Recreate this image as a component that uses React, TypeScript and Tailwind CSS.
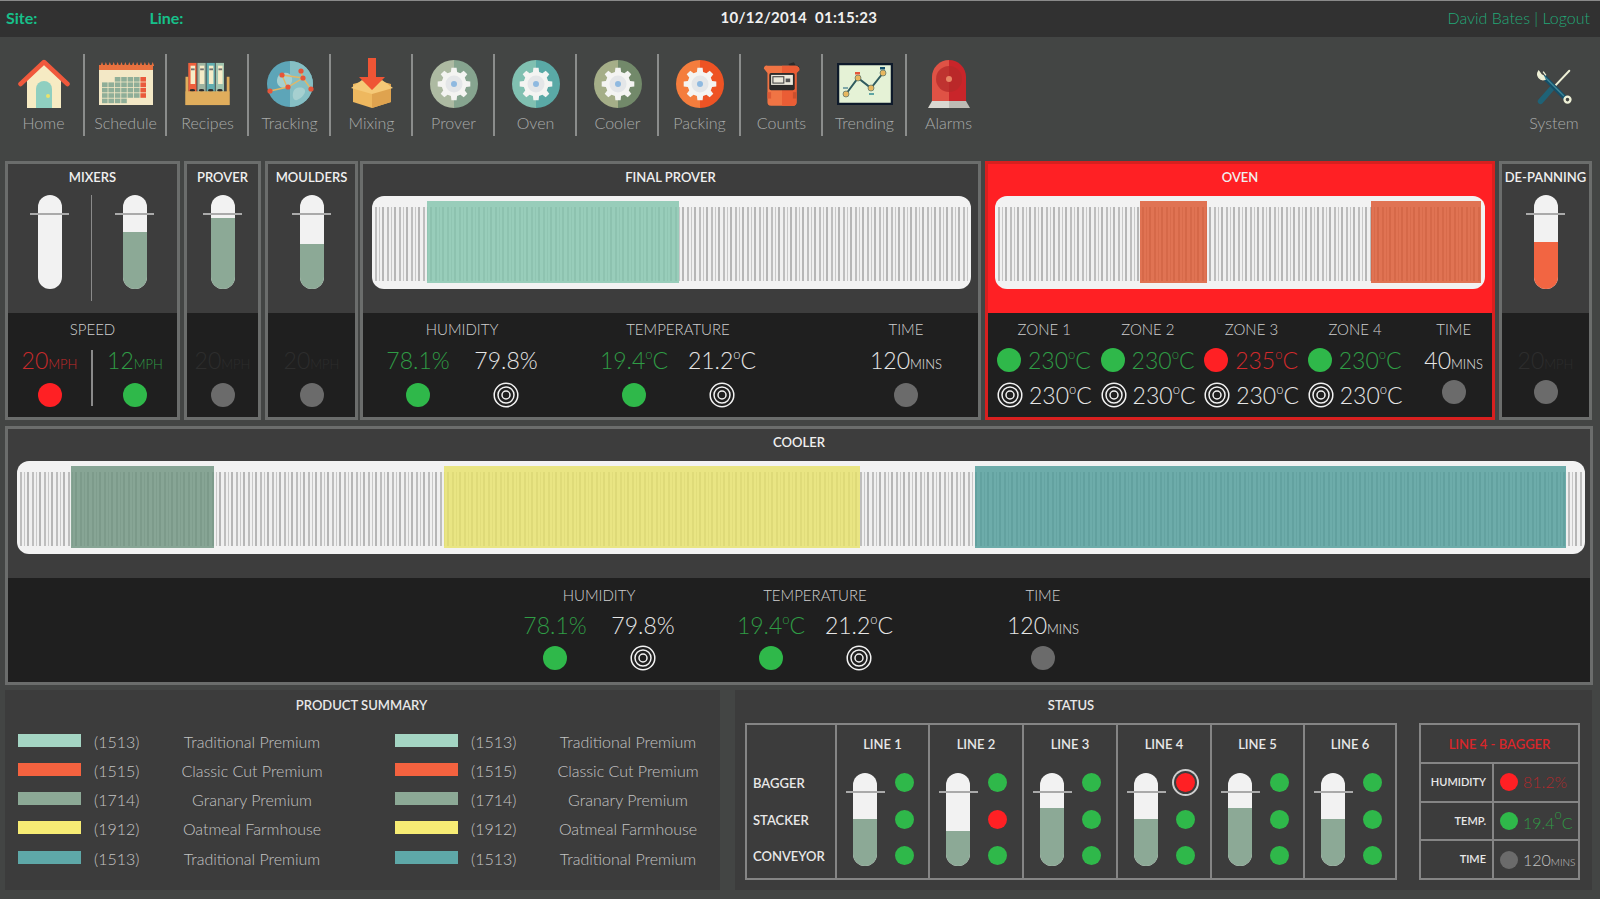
import React from 'react';

const GREEN = 'bg-[#2fb84a]';
const RED = 'bg-[#ff2024]';
const GREY = 'bg-[#6b6b6b]';

function Dot({ color, size = 'w-6 h-6', extra = '' }: { color: string; size?: string; extra?: string }) {
  return <div className={`${size} rounded-full shrink-0 ${color} ${extra}`} />;
}

function Target({ size = 26 }: { size?: number }) {
  return (
    <svg width={size} height={size} viewBox="0 0 26 26" fill="none" stroke="#f2f2f2" strokeWidth="1.5" className="shrink-0">
      <circle cx="13" cy="13" r="11.8" />
      <circle cx="13" cy="13" r="8" />
      <circle cx="13" cy="13" r="4" />
    </svg>
  );
}

function Deg({ v }: { v: string }) {
  return (
    <span>
      {v}
      <span className="text-[13px] align-[10px] leading-none">o</span>C
    </span>
  );
}

function Tube({ fill, h = 94, w = 'w-6', color = 'bg-[#8ca996]', marker = 39 }: { fill: number; h?: number; w?: string; color?: string; marker?: number }) {
  return (
    <div className="relative flex justify-center">
      <div className={`${w} rounded-full bg-[#f2f2f2] overflow-hidden flex flex-col justify-end`} style={{ height: h }}>
        <div className={color} style={{ height: fill }} />
      </div>
      <div className="absolute top-[18px] h-[2px] bg-[#aaaaaa]" style={{ width: marker }} />
    </div>
  );
}

// belt with stripes; blocks are [start, end, colour] measured from the inner left edge
function Belt({ width, blocks }: { width: number; blocks: [number, number, string][] }) {
  let pos = 0;
  const parts: React.ReactNode[] = [];
  blocks.forEach(([a, b, c], i) => {
    parts.push(<div key={`s${i}`} style={{ width: a - pos }} className="shrink-0" />);
    parts.push(<div key={`b${i}`} style={{ width: b - a, backgroundColor: c }} className="shrink-0 opacity-[0.82]" />);
    pos = b;
  });
  return (
    <div className="bg-[#f2f2f2] rounded-[12px] h-[93px] pl-[3px] pr-[3px] pt-[5px] pb-[6px]" style={{ width }}>
      <div className="h-full flex bg-[repeating-linear-gradient(90deg,#bebebe_0px,#bebebe_2px,#f0f0f0_2px,#f0f0f0_4px,#c8c8c8_4px,#c8c8c8_5px,#f0f0f0_5px,#f0f0f0_7px,#b6b6b6_7px,#b6b6b6_9px,#f0f0f0_9px,#f0f0f0_12px)] bg-size-[100%_74px] bg-position-[0_6px] bg-no-repeat">
        {parts}
      </div>
    </div>
  );
}

function Title({ children }: { children: React.ReactNode }) {
  return <div className="h-[26px] pt-[3px] text-center text-[13px] font-semibold text-[#f0f0f0] leading-[20px] whitespace-nowrap">{children}</div>;
}

function Label({ children, className = '' }: { children: React.ReactNode; className?: string }) {
  return <div className={`h-5 text-[15px] font-light leading-5 text-[#d0d0d0] text-center whitespace-nowrap ${className}`}>{children}</div>;
}

function Val({ n, unit, color = 'text-[#e6e6e6]' }: { n: React.ReactNode; unit?: string; color?: string }) {
  return (
    <div className={`h-[30px] leading-[30px] text-[23px] font-light text-center whitespace-nowrap ${color}`}>
      {n}
      {unit && <span className="text-[13px]">{unit}</span>}
    </div>
  );
}

function Panel({ width, title, top, bottom, alert = false }: { width: string; title: string; top: React.ReactNode; bottom: React.ReactNode; alert?: boolean }) {
  return (
    <div className={`${width} shrink-0 flex flex-col border-[3px] ${alert ? 'border-[#d8201f]' : 'border-[#6b6d6c]'}`}>
      <div className={`h-[149px] ${alert ? 'bg-[#ff2024]' : 'bg-[#3d3d3d]'}`}>
        <Title>{title}</Title>
        <div className="mt-[5px]">{top}</div>
      </div>
      <div className="flex-1 bg-[#1f1f1f] pt-[6px]">{bottom}</div>
    </div>
  );
}

function Metrics({ pl, rowGap, dotGap }: { pl: string; rowGap: string; dotGap: string }) {
  const group = (label: string, left: React.ReactNode, right: React.ReactNode) => (
    <div className="w-[176px]">
      <Label>{label}</Label>
      <div className={`grid grid-cols-2 ${rowGap}`}>
        {left}
        {right}
      </div>
      <div className={`grid grid-cols-2 justify-items-center items-center h-[26px] ${dotGap}`}>
        <Dot color={GREEN} />
        <Target />
      </div>
    </div>
  );
  return (
    <div className={`flex ${pl}`}>
      {group('HUMIDITY', <Val n="78.1%" color="text-[#2f9c45]" />, <Val n="79.8%" />)}
      <div className="w-10" />
      {group('TEMPERATURE', <Val n={<Deg v="19.4" />} color="text-[#2f9c45]" />, <Val n={<Deg v="21.2" />} />)}
      <div className="w-[90px]" />
      <div className="w-[100px]">
        <Label>TIME</Label>
        <div className={rowGap}>
          <Val n="120" unit="MINS" />
        </div>
        <div className={`flex justify-center items-center h-[26px] ${dotGap}`}>
          <Dot color={GREY} />
        </div>
      </div>
    </div>
  );
}

function gearPoints(cx: number, cy: number, outer: number, inner: number, teeth: number) {
  const pts: string[] = [];
  for (let i = 0; i < teeth; i++) {
    const s = (i / teeth) * Math.PI * 2;
    const w = (Math.PI * 2) / teeth;
    const at = (r: number, a: number) => `${(cx + r * Math.cos(a)).toFixed(1)},${(cy + r * Math.sin(a)).toFixed(1)}`;
    pts.push(at(inner, s - w * 0.32), at(outer, s - w * 0.2), at(outer, s + w * 0.2), at(inner, s + w * 0.32));
  }
  return pts.join(' ');
}

function GearIcon({ left, right }: { left: string; right: string }) {
  return (
    <svg width="50" height="50" viewBox="0 0 50 50">
      <path d="M25 1a24 24 0 0 0 0 48z" fill={left} />
      <path d="M25 1a24 24 0 0 1 0 48z" fill={right} />
      <polygon points={gearPoints(25, 25, 16.5, 12.5, 8)} fill="#f4f4f2" />
      <circle cx="25" cy="25" r="8.5" fill="#e4e6e8" />
      <circle cx="25" cy="25" r="3" fill="#8fb9e0" />
    </svg>
  );
}

function HomeIcon() {
  return (
    <svg width="52" height="50" viewBox="0 0 52 50">
      <path d="M9 20 26 5l17 15v29H9z" fill="#f6ebc3" />
      <path d="M18 49V30a8 8 0 0 1 16 0v19z" fill="#8fcfc0" />
      <circle cx="30" cy="37" r="2" fill="#e9e26a" />
      <path d="M2.5 25 26 3l23.5 22" fill="none" stroke="#f0593c" strokeWidth="4.5" strokeLinecap="round" strokeLinejoin="round" />
    </svg>
  );
}

function ScheduleIcon() {
  const cells: React.ReactNode[] = [];
  for (let r = 0; r < 5; r++) {
    for (let c = 0; c < 7; c++) {
      if (r === 0 && c < 2) continue;
      if (r === 4 && c > 3) continue;
      cells.push(<rect key={`${r}-${c}`} x={4 + c * 6.4} y={17 + r * 5.4} width="5.6" height="4.6" fill={c === 6 ? '#e9593b' : '#8fae98'} />);
    }
  }
  return (
    <svg width="56" height="46" viewBox="0 0 56 46" className="mb-[3px]">
      <rect x="1" y="5" width="54" height="40" fill="#f3e8c6" />
      <rect x="1" y="5" width="54" height="5" fill="#e9713f" />
      {Array.from({ length: 14 }).map((_, i) => (
        <path key={i} d={`M${2.5 + i * 3.9} 6 l1.5 -4 l1.5 4z`} fill="#e9713f" />
      ))}
      {cells}
    </svg>
  );
}

function RecipesIcon() {
  const bind = (x: number, c: string, w = 9) => (
    <g key={x}>
      <rect x={x} y="1" width={w} height="36" fill={c} />
      <rect x={x + 2.5} y="4" width="5" height="20" fill="#f6ecc8" />
      <rect x={x + 3} y="7" width="4" height="2" fill="#6f6f6f" />
      <ellipse cx={x + 4.5} cy="31" rx="3" ry="1.6" fill="#2b2b2b" />
    </g>
  );
  return (
    <svg width="47" height="44" viewBox="0 0 50 48" className="mb-[3px]">
      {bind(4, '#ee5f3c')}
      {bind(14, '#9db4a1')}
      {bind(24, '#62aeb0')}
      {bind(34, '#9fc3ae')}
      <path d="M1 16h3v17h42V16h3v31H1z" fill="#e0ad5c" />
      <rect x="1" y="32" width="48" height="15" fill="#e0ad5c" />
    </svg>
  );
}

function TrackingIcon() {
  return (
    <svg width="50" height="50" viewBox="0 0 50 50">
      <circle cx="25" cy="25" r="23" fill="#5da5b8" />
      <path d="M25 2a23 23 0 0 1 0 46z" fill="#86bfc4" />
      <path d="M14 16c6-4 12-2 13 3s-3 10-8 10-10-6-5-13zM30 30c5-3 11-1 10 3s-7 9-10 8-3-8 0-11z" fill="#a6d0d0" />
      <path d="M5 32l18-4 15-9-2-6M17 16l5 12M17 16l21 3 8 11" fill="none" stroke="#e3b765" strokeWidth="1.4" />
      {[[5, 32], [23, 28], [38, 19], [36, 12], [17, 16], [46, 30]].map(([x, y]) => (
        <circle key={`${x}${y}`} cx={x} cy={y} r="2.6" fill="#e5553a" />
      ))}
    </svg>
  );
}

function MixingIcon() {
  return (
    <svg width="44" height="52" viewBox="0 0 44 52">
      <path d="M3 27 22 22l19 5v18l-19 6-19-6z" fill="#eeb85f" />
      <path d="M22 30v21l19-6V27z" fill="#dfa34f" />
      <path d="M1 31 12 23l10 4 10-4 11 8-21 6z" fill="#f5c977" />
      <path d="M18 1h8v19h9L22 33 9 20h9z" fill="#ef5535" />
    </svg>
  );
}

function CountsIcon() {
  return (
    <svg width="40" height="50" viewBox="0 0 44 50">
      <path d="M29 3l6-2 3 5-5 3zM36 6l4-1 2 4-4 2z" fill="#2b2b2b" />
      <path d="M2 8c0-2 2-4 4-3l30 0c3 0 6 2 5 5l-3 3v32c0 3-2 4-4 4H10c-3 0-4-2-4-4V13z" fill="#f07444" />
      <path d="M22 5h14c3 0 6 2 5 5l-3 3v32c0 3-2 4-4 4H22z" fill="#ea5d35" />
      <rect x="8" y="13" width="28" height="19" rx="2" fill="#2b2b2b" />
      <rect x="10" y="15" width="24" height="11" fill="#ece9dc" />
      <rect x="12" y="17" width="12" height="7" fill="none" stroke="#444" strokeWidth="1.2" />
      <rect x="26" y="19" width="5" height="4" fill="#555" />
      <rect x="6" y="34" width="4" height="7" fill="#dd5a36" />
      <rect x="34" y="34" width="4" height="7" fill="#cc4f2d" />
    </svg>
  );
}

function TrendingIcon() {
  return (
    <svg width="56" height="42" viewBox="0 0 56 42" className="mb-[4px]">
      <rect x="1" y="1" width="54" height="40" fill="#e5f2d6" stroke="#0e1a2b" strokeWidth="2.5" />
      <path d="M9 31 21 15l13 10 12-15" fill="none" stroke="#2f5b5f" strokeWidth="2" />
      {[[9, 31], [21, 15], [34, 25], [46, 10]].map(([x, y]) => (
        <circle key={x} cx={x} cy={y} r="3" fill="#e8b75f" stroke="#3a5e5e" strokeWidth="0.6" />
      ))}
      <rect x="18" y="9" width="5" height="2.5" fill="#e5553a" />
      <rect x="43" y="4" width="5" height="2.5" fill="#14506a" />
      <rect x="6" y="24" width="5" height="2" fill="#7fa8a8" />
      <rect x="32" y="30" width="5" height="2" fill="#5ea5a3" />
    </svg>
  );
}

function AlarmIcon() {
  return (
    <svg width="44" height="50" viewBox="0 0 44 50">
      <path d="M5 42V18A17 17 0 0 1 22 1v41z" fill="#df5245" />
      <path d="M39 42V18A17 17 0 0 0 22 1v41z" fill="#c9252a" />
      <circle cx="22" cy="20" r="13" fill="#b42a2a" fillOpacity="0.75" />
      <circle cx="22" cy="20" r="3" fill="#e88464" />
      <path d="M5 42h17v7H1z" fill="#d9d7d0" />
      <path d="M22 42h17l4 7H22z" fill="#bdbbb4" />
    </svg>
  );
}

function SystemIcon() {
  return (
    <svg width="36" height="38" viewBox="0 0 40 40">
      <path d="M37 2 19 21" stroke="#eef0d6" strokeWidth="2.2" strokeLinecap="round" />
      <path d="M19 20 5 36" stroke="#1f6276" strokeWidth="6" strokeLinecap="round" />
      <path d="M8 8 33 33" stroke="#14506a" strokeWidth="5" />
      <path d="M9 8 31 30" stroke="#3f8797" strokeWidth="1.5" />
      <path d="M3 2.5a6 6 0 0 0 7 9l-2-4-2-1z M8 3l3 4" fill="#eef0d6" stroke="#eef0d6" strokeWidth="1.5" />
      <circle cx="35" cy="34" r="3.3" fill="none" stroke="#eef0d6" strokeWidth="2.6" />
    </svg>
  );
}

const navItems: [string, React.ReactNode][] = [
  ['Home', <HomeIcon />],
  ['Schedule', <ScheduleIcon />],
  ['Recipes', <RecipesIcon />],
  ['Tracking', <TrackingIcon />],
  ['Mixing', <MixingIcon />],
  ['Prover', <GearIcon left="#adbaa2" right="#86a48f" />],
  ['Oven', <GearIcon left="#80c0b1" right="#5aa9a6" />],
  ['Cooler', <GearIcon left="#a5ae88" right="#72896a" />],
  ['Packing', <GearIcon left="#f47d3d" right="#ee5324" />],
  ['Counts', <CountsIcon />],
  ['Trending', <TrendingIcon />],
  ['Alarms', <AlarmIcon />],
];

function NavItem({ label, icon, sep, wide }: { label: string; icon: React.ReactNode; sep: boolean; wide: boolean }) {
  return (
    <div className={`${wide ? 'w-[84px]' : 'w-[82px]'} h-[82px] flex flex-col items-center ${sep ? 'border-r-2 border-[#8b8d8c]' : ''}`}>
      <div className="h-[56px] flex items-end justify-center pb-[1px] pl-px">{icon}</div>
      <div className="mt-[3px] pl-px text-[16px] font-light text-[#a9abaa] leading-5 whitespace-nowrap">{label}</div>
    </div>
  );
}

const products: [string, string, string][] = [
  ['bg-[#a4d5c3]', '(1513)', 'Traditional Premium'],
  ['bg-[#f4623f]', '(1515)', 'Classic Cut Premium'],
  ['bg-[#8ca996]', '(1714)', 'Granary Premium'],
  ['bg-[#f7ec74]', '(1912)', 'Oatmeal Farmhouse'],
  ['bg-[#5ea8a8]', '(1513)', 'Traditional Premium'],
];

const lines = [
  { name: 'LINE 1', fill: 47, dots: [GREEN, GREEN, GREEN] },
  { name: 'LINE 2', fill: 35, dots: [GREEN, RED, GREEN] },
  { name: 'LINE 3', fill: 58, dots: [GREEN, GREEN, GREEN] },
  { name: 'LINE 4', fill: 47, dots: [RED, GREEN, GREEN], picked: true },
  { name: 'LINE 5', fill: 58, dots: [GREEN, GREEN, GREEN] },
  { name: 'LINE 6', fill: 47, dots: [GREEN, GREEN, GREEN] },
];

const zones = [
  { name: 'ZONE 1', v: '230', dot: GREEN, c: 'text-[#2f9c45]' },
  { name: 'ZONE 2', v: '230', dot: GREEN, c: 'text-[#2f9c45]' },
  { name: 'ZONE 3', v: '235', dot: RED, c: 'text-[#d02a2c]' },
  { name: 'ZONE 4', v: '230', dot: GREEN, c: 'text-[#2f9c45]' },
];

export default function App() {
  return (
    <div className="w-[1600px] h-[899px] overflow-hidden bg-[#434544] font-['Lato',sans-serif]">
      {/* top bar */}
      <div className="h-[37px] bg-[#313131] border-t border-[#8a8a8a] flex items-center px-[6px] pb-[3px]">
        <span className="text-[16px] font-bold text-[#17c08a]">Site:</span>
        <span className="ml-[112px] text-[16px] font-bold text-[#17c08a]">Line:</span>
        <span className="ml-[537px] text-[15px] font-bold text-[#f0f0f0] whitespace-pre tracking-[0.3px]">10/12/2014  01:15:23</span>
        <span className="ml-auto mr-[4px] text-[16px] font-light text-[#22a877]">David Bates | Logout</span>
      </div>

      {/* nav */}
      <div className="h-[124px] flex pl-[3px] pt-[17px]">
        {navItems.map(([label, icon], i) => (
          <NavItem key={label} label={label} icon={icon} sep={i < navItems.length - 1} wide={label === 'Trending'} />
        ))}
        <div className="ml-auto mr-[7px] w-[78px] flex flex-col items-center">
          <div className="h-[56px] flex items-end justify-center pb-[4px]">
            <SystemIcon />
          </div>
          <div className="mt-[3px] text-[16px] font-light text-[#a9abaa] leading-5">System</div>
        </div>
      </div>

      {/* process row */}
      <div className="h-[259px] flex pl-[5px] gap-[4px]">
        <Panel
          width="w-[175px]"
          title="MIXERS"
          top={
            <div className="grid grid-cols-[83px_1px_1fr]">
              <Tube fill={0} />
              <div className="bg-[#8a8a8a] h-[106px]" />
              <Tube fill={57} />
            </div>
          }
          bottom={
            <>
              <Label>SPEED</Label>
              <div className="grid grid-cols-[83px_2px_1fr] mt-[6px]">
                <div className="flex flex-col items-center">
                  <Val n="20" unit="MPH" color="text-[#c52a2b]" />
                  <Dot color={RED} extra="mt-[8px]" />
                </div>
                <div className="bg-[#8a8a8a] h-[56px] mt-[5px]" />
                <div className="flex flex-col items-center">
                  <Val n="12" unit="MPH" color="text-[#2f9c45]" />
                  <Dot color={GREEN} extra="mt-[8px]" />
                </div>
              </div>
            </>
          }
        />
        <Panel
          width="w-[77px]"
          title="PROVER"
          top={<Tube fill={71} />}
          bottom={
            <div className="pt-[26px] flex flex-col items-center">
              <Val n="20" unit="MPH" color="text-[#2d2d2d]" />
              <Dot color={GREY} extra="mt-[8px]" />
            </div>
          }
        />
        <Panel
          width="w-[93px]"
          title="MOULDERS"
          top={<Tube fill={45} />}
          bottom={
            <div className="pt-[26px] flex flex-col items-center">
              <Val n="20" unit="MPH" color="text-[#2d2d2d]" />
              <Dot color={GREY} extra="mt-[8px]" />
            </div>
          }
        />
        <Panel
          width="w-[621px] -ml-[2px]"
          title="FINAL PROVER"
          top={
            <div className="pl-[9px] pt-px">
              <Belt width={599} blocks={[[52, 304, '#84c4ad']]} />
            </div>
          }
          bottom={<Metrics pl="pl-[11px]" rowGap="mt-[6px]" dotGap="mt-[7px]" />}
        />
        <Panel
          width="w-[510px]"
          title="OVEN"
          alert
          top={
            <div className="pl-[7px] pt-px">
              <Belt width={490} blocks={[[142, 209, '#dc5730'], [373, 483, '#dc5730']]} />
            </div>
          }
          bottom={
            <div className="grid grid-cols-[repeat(4,103.6px)_1fr] pl-[9px]">
              {zones.map((z) => (
                <div key={z.name}>
                  <Label className="pr-[9px]">{z.name}</Label>
                  <div className="mt-[6px] h-[30px] flex items-center gap-[7px]">
                    <Dot color={z.dot} />
                    <div className={`text-[23px] font-light leading-[30px] whitespace-nowrap ${z.c}`}>
                      <Deg v={z.v} />
                    </div>
                  </div>
                  <div className="mt-[5px] h-[30px] flex items-center gap-[6px]">
                    <Target />
                    <div className="text-[23px] font-light leading-[30px] text-[#e6e6e6] whitespace-nowrap">
                      <Deg v="230" />
                    </div>
                  </div>
                </div>
              ))}
              <div className="flex flex-col items-center pl-[4px]">
                <Label>TIME</Label>
                <div className="mt-[6px]">
                  <Val n="40" unit="MINS" />
                </div>
                <Dot color={GREY} extra="mt-[5px]" />
              </div>
            </div>
          }
        />
        <Panel
          width="w-[93px]"
          title="DE-PANNING"
          top={<Tube fill={47} color="bg-[#f26542]" />}
          bottom={
            <div className="pt-[26px] flex flex-col items-center">
              <Val n="20" unit="MPH" color="text-[#2d2d2d]" />
              <Dot color={GREY} extra="mt-[5px]" />
            </div>
          }
        />
      </div>

      {/* cooler */}
      <div className="mt-[6px] mx-[5px] w-[1588px] h-[259px] flex flex-col border-[3px] border-[#6b6d6c]">
        <div className="h-[149px] bg-[#3d3d3d]">
          <Title>COOLER</Title>
          <div className="pl-[9px] pt-[6px]">
            <Belt width={1568} blocks={[[51, 194, '#6f9480'], [424, 840, '#e6e26a'], [955, 1546, '#4f9c9a']]} />
          </div>
        </div>
        <div className="flex-1 bg-[#1f1f1f] pt-[7px]">
          <Metrics pl="pl-[503px]" rowGap="mt-[5px]" dotGap="mt-[5px]" />
        </div>
      </div>

      {/* bottom */}
      <div className="mt-[5px] flex pl-[5px]">
        <div className="w-[715px] h-[200px] bg-[#3c3c3c]">
          <div className="h-[30px] text-center text-[13px] font-semibold text-[#e8e8e8] leading-[30px] -ml-[2px]">PRODUCT SUMMARY</div>
          <div className="mt-[7px] pl-[13px] flex gap-[51px]">
            {[0, 1].map((col) => (
              <div key={col} className="w-[326px]">
                {products.map(([sw, code, name], i) => (
                  <div key={i} className="h-[29.25px] flex items-center">
                    <div className={`w-[63px] h-[13px] -mt-[3px] shrink-0 ${sw}`} />
                    <div className="ml-[13px] w-[66px] text-[16px] font-light text-[#c4c4c4]">{code}</div>
                    <div className={`${col === 0 ? 'w-[184px]' : 'w-[182px]'} text-center text-[16px] font-light text-[#c4c4c4] whitespace-nowrap`}>{name}</div>
                  </div>
                ))}
              </div>
            ))}
          </div>
        </div>

        <div className="ml-[15px] w-[857px] h-[200px] bg-[#3c3c3c] pl-[10px]">
          <div className="w-[652px] h-[33px] text-center text-[13px] font-semibold text-[#e8e8e8] leading-[30px]">STATUS</div>
          <div className="flex gap-[22px]">
            <div className="w-[652px] h-[157px] border-2 border-[#858585] grid grid-cols-[90px_93px_94px_94px_94px_93px_1fr]">
              <div className="border-r-2 border-[#858585] pl-[6px] pt-[49px] flex flex-col gap-[17.5px]">
                {['BAGGER', 'STACKER', 'CONVEYOR'].map((t) => (
                  <div key={t} className="h-[19px] leading-[19px] text-[13px] font-semibold text-[#e8e8e8]">{t}</div>
                ))}
              </div>
              {lines.map((l, i) => (
                <div key={l.name} className={`${i < 5 ? 'border-r-2 border-[#858585]' : ''}`}>
                  <div className="h-[38px] text-center text-[13px] font-semibold text-[#e8e8e8] leading-[38px]">{l.name}</div>
                  <div className="mt-[10px] pl-[16px] flex gap-[18px]">
                    <Tube fill={l.fill} h={93} marker={39} />
                    <div className="flex flex-col gap-[17.5px]">
                      {l.dots.map((d, j) => (
                        <Dot key={j} color={d} size="w-[19px] h-[19px]" extra={l.picked && j === 0 ? 'shadow-[0_0_0_2px_#3c3c3c,0_0_0_4px_#cfcfcf]' : ''} />
                      ))}
                    </div>
                  </div>
                </div>
              ))}
            </div>

            <div className="w-[161px] h-[157px] border-2 border-[#858585] flex flex-col">
              <div className="h-[39px] text-center text-[13px] font-semibold text-[#d8262a] leading-[39px] border-b-2 border-[#858585]">LINE 4 - BAGGER</div>
              {[
                { k: 'HUMIDITY', d: RED, v: <span className="text-[#b02a2c]">81.2%</span> },
                { k: 'TEMP.', d: GREEN, v: <span className="text-[#2f9c45]"><Deg v="19.4" /></span> },
                { k: 'TIME', d: GREY, v: <span className="text-[#c4c4c4]">120<span className="text-[10px]">MINS</span></span> },
              ].map((r, i) => (
                <div key={r.k} className={`flex-1 flex ${i < 2 ? 'border-b-2 border-[#858585]' : ''}`}>
                  <div className="w-[73px] shrink-0 pr-[6px] border-r-2 border-[#858585] flex items-center justify-end text-[11px] font-semibold text-[#e8e8e8]">{r.k}</div>
                  <div className="flex-1 flex items-center pl-[6px] gap-[5px] text-[16px] font-light whitespace-nowrap">
                    <Dot color={r.d} size="w-[18px] h-[18px]" />
                    {r.v}
                  </div>
                </div>
              ))}
            </div>
          </div>
        </div>
      </div>
    </div>
  );
}
